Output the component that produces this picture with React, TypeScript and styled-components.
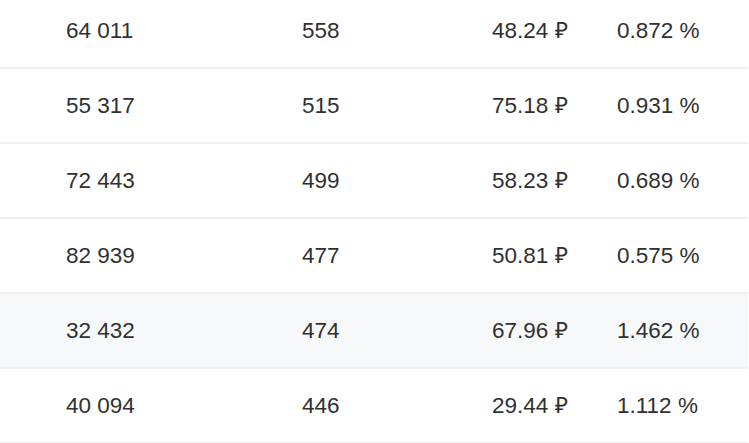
import React from "react";
import styled, { createGlobalStyle } from "styled-components";

const GlobalStyle = createGlobalStyle`
  html, body {
    margin: 0;
    padding: 0;
    background: #ffffff;
    overflow: hidden;
  }
  body {
    font-family: "Liberation Sans", Arial, sans-serif;
  }
`;

const Viewport = styled.div`
  width: 749px;
  height: 443px;
  overflow: hidden;
  background: #ffffff;
`;

const Table = styled.div`
  display: flex;
  flex-direction: column;
  width: 748px;
  margin-top: -6px;
`;

const Row = styled.div<{ $highlight?: boolean }>`
  display: grid;
  grid-template-columns: 302px 190px 125px 1fr;
  align-items: center;
  height: 73px;
  border-bottom: 2px solid #f0f0f0;
  background: ${(p) => (p.$highlight ? "#f7f8fa" : "#ffffff")};
`;

const Cell = styled.div<{ $first?: boolean }>`
  padding-left: ${(p) => (p.$first ? "66px" : "0")};
  padding-top: 2px;
  font-size: 22.5px;
  line-height: 1;
  color: #303030;
  white-space: nowrap;
`;

type Item = { views: string; clicks: string; price: string; ctr: string };

const rows: Item[] = [
  { views: "64 011", clicks: "558", price: "48.24 ₽", ctr: "0.872 %" },
  { views: "55 317", clicks: "515", price: "75.18 ₽", ctr: "0.931 %" },
  { views: "72 443", clicks: "499", price: "58.23 ₽", ctr: "0.689 %" },
  { views: "82 939", clicks: "477", price: "50.81 ₽", ctr: "0.575 %" },
  { views: "32 432", clicks: "474", price: "67.96 ₽", ctr: "1.462 %" },
  { views: "40 094", clicks: "446", price: "29.44 ₽", ctr: "1.112 %" },
];

export default function App() {
  return (
    <>
      <GlobalStyle />
      <Viewport>
        <Table>
          {rows.map((r, i) => (
            <Row key={i} $highlight={i === 4}>
              <Cell $first>{r.views}</Cell>
              <Cell>{r.clicks}</Cell>
              <Cell>{r.price}</Cell>
              <Cell>{r.ctr}</Cell>
            </Row>
          ))}
        </Table>
      </Viewport>
    </>
  );
}
